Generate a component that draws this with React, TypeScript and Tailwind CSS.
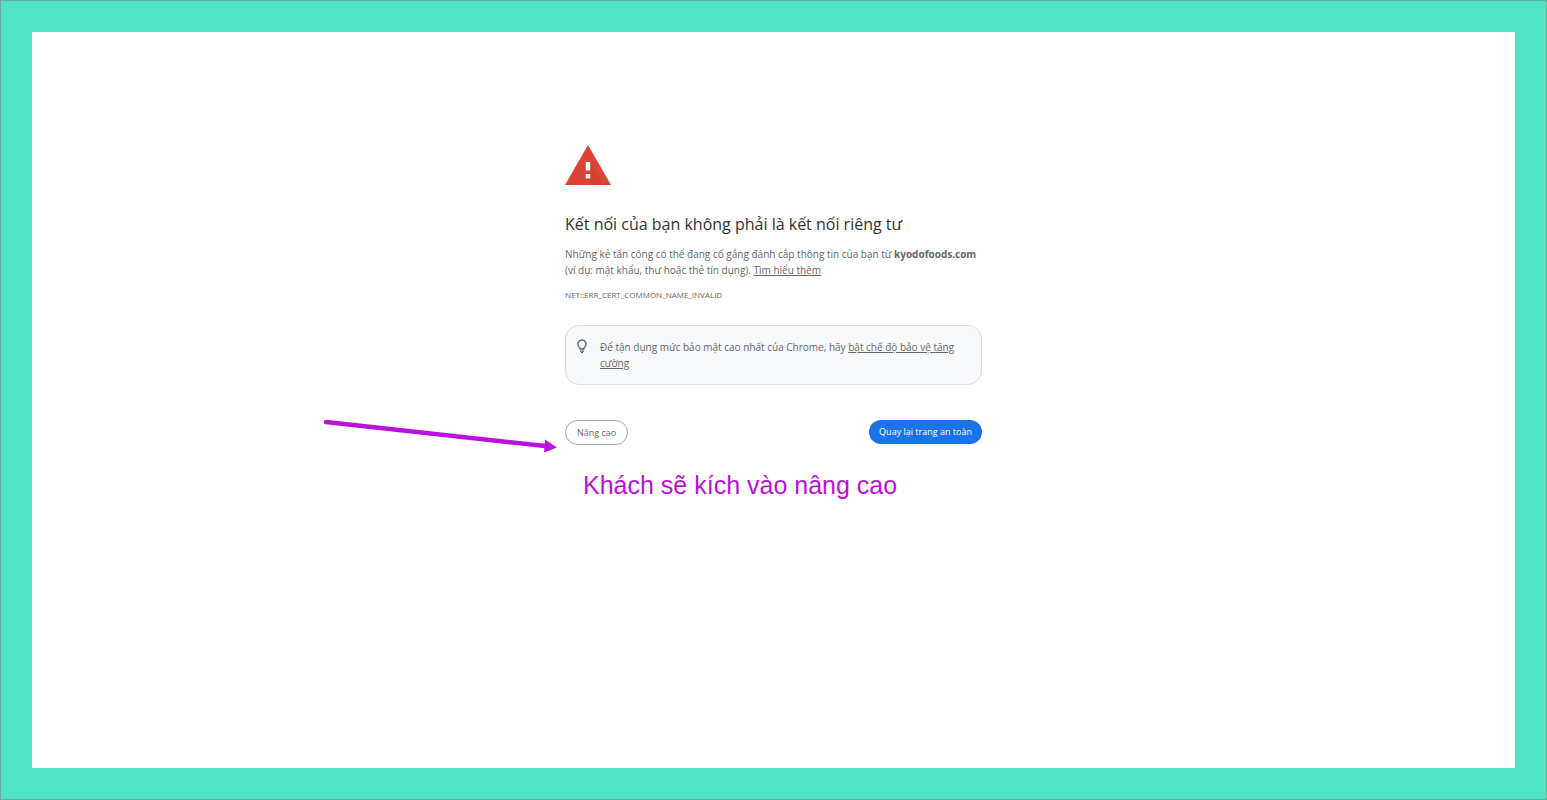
function WarningIcon() {
  return (
    <svg width="46" height="40" viewBox="0 0 46 40" aria-hidden="true">
      <path d="M23 0 46 40H0z" fill="#db4437" />
      <path d="M25 16l13 24H27l-6-7z" fill="#c53929" opacity="0.3" />
      <path d="M20.800 17h4.400v8.500h-4.400zM20.800 29h4.400v4.400h-4.400z" fill="#fff" />
    </svg>
  )
}

function BulbIcon() {
  return (
    <svg className="shrink-0" width="12" height="15" viewBox="0 0 12 15" fill="none" stroke="#5f6368" aria-hidden="true">
      <path d="M4 10V8.7A4.1 4.1 0 1 1 8 8.700V10z" strokeWidth="1.3" strokeLinejoin="round" />
      <path d="M4 12.200h4M5 13.500h2" strokeWidth="1.2" />
    </svg>
  )
}

function Arrow() {
  return (
    <svg
      className="absolute -left-[242px] -top-[2px]"
      width="236"
      height="38"
      viewBox="0 0 236 38"
      fill="#bb11dd"
      aria-hidden="true"
    >
      <path d="M3 4 222 28" stroke="#bb11dd" strokeWidth="4.400" strokeLinecap="round" />
      <path d="M222 21.500 234 29.500 221 34.500z" />
    </svg>
  )
}

export default function App() {
  return (
    <div className="flex min-h-screen border border-[#6cae9f] bg-[#4fe5c3] p-[31px] font-['Open_Sans',sans-serif]">
      <main className="flex-1 bg-white px-4 pt-[113px]">
        <div className="mx-auto max-w-[417px] text-[10px] leading-4 text-[#646669]">
          <WarningIcon />
          <h1 className="mt-[27px] text-[16px] leading-6 text-[#303134]">
            Kết nối của bạn không phải là kết nối riêng tư
          </h1>
          <p className="mt-[10px]">
            <span className="whitespace-nowrap">
              Những kẻ tấn công có thể đang cố gắng đánh cắp thông tin của bạn từ <strong>kyodofoods.com</strong>
            </span>{' '}
            (ví dụ: mật khẩu, thư hoặc thẻ tín dụng).{' '}
            <a href="#learn-more" className="underline">Tìm hiểu thêm</a>
          </p>
          <p className="mt-[9px] text-[8px]">NET::ERR_CERT_COMMON_NAME_INVALID</p>

          <div className="mt-[22px] flex gap-3 rounded-[14px] border border-[#dadce0] bg-[#f8f9fb] py-[13px] pl-[10px] pr-4">
            <BulbIcon />
            <p>
              Để tận dụng mức bảo mật cao nhất của Chrome, hãy{' '}
              <a href="#enhanced-protection" className="underline">
                bật chế độ bảo vệ tăng
                <br />
                cường
              </a>
            </p>
          </div>

          <div className="relative mt-[35px] flex items-start justify-between">
            <Arrow />
            <button className="h-[25px] rounded-full border border-[#a5a7aa] px-[11px] text-[9px]">
              Nâng cao
            </button>
            <button className="h-6 rounded-full bg-[#1a73e8] px-[10px] text-[9px] text-white">
              Quay lại trang an toàn
            </button>
          </div>
          <p className="mt-6 pl-[18px] font-['Liberation_Sans',sans-serif] text-[25px] leading-8 text-[#bb11dd]">
            Khách sẽ kích vào nâng cao
          </p>
        </div>
      </main>
    </div>
  )
}
